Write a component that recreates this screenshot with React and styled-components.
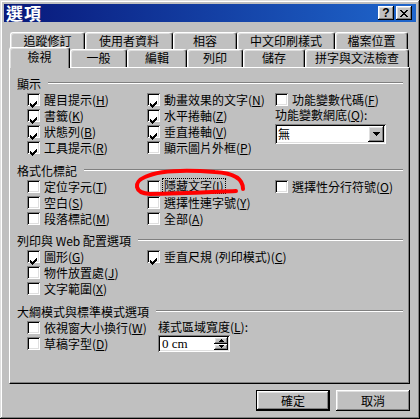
import React from "react";
import styled, { createGlobalStyle } from "styled-components";

const GlobalStyle = createGlobalStyle`
  html, body { margin: 0; padding: 0; background: #c0c0c0; }
  body {
    font-family: "Noto Sans CJK TC", "Noto Sans", sans-serif;
    font-size: 12px;
    color: #000;
  }
  * { box-sizing: border-box; }
`;

const raised = `
  box-shadow: inset -1px -1px #000, inset 1px 1px #fff,
    inset -2px -2px #808080, inset 2px 2px #dfdfdf;
`;
const sunken = `
  box-shadow: inset 1px 1px #808080, inset -1px -1px #fff,
    inset 2px 2px #000, inset -2px -2px #dfdfdf;
`;

const Window = styled.div`
  position: relative;
  width: 420px;
  height: 419px;
  padding: 4px;
  background: #c0c0c0;
  display: flex;
  flex-direction: column;
  box-shadow: inset -1px -1px #000, inset 1px 1px #dfdfdf,
    inset -2px -2px #808080, inset 2px 2px #fff;
`;

const TitleBar = styled.div`
  height: 18px;
  display: flex;
  align-items: center;
  padding: 0 4px 0 2px;
  background: linear-gradient(to right, #08187a, #1f66cc);
`;

const TitleText = styled.div`
  flex: 1;
  color: #fff;
  font-weight: bold;
  font-size: 17px;
  line-height: 18px;
  letter-spacing: 1px;
`;

const TitleButton = styled.div`
  width: 16px;
  height: 14px;
  margin-left: ${(p) => (p.$first ? 0 : 2)}px;
  background: #c0c0c0;
  display: flex;
  align-items: center;
  justify-content: center;
  font-family: "Liberation Sans", sans-serif;
  font-weight: bold;
  font-size: 12px;
  line-height: 14px;
  ${raised}
`;

const Body = styled.div`
  flex: 1;
  display: flex;
  flex-direction: column;
  padding: 10px 6px 0 5px;
`;

const TabRow = styled.div`
  display: flex;
  height: ${(p) => p.$h}px;
  margin-left: ${(p) => p.$indent || 0}px;
`;

const Tab = styled.div`
  width: ${(p) => p.$w}px;
  height: ${(p) => (p.$active ? p.$h + 3 : p.$h)}px;
  margin-top: ${(p) => (p.$active ? -2 : 0)}px;
  position: relative;
  z-index: ${(p) => (p.$active ? 1 : 0)};
  background: #c0c0c0;
  border-top: 1px solid #fff;
  border-left: 1px solid #fff;
  border-right: 1px solid #000;
  border-radius: 3px 3px 0 0;
  box-shadow: inset -1px 0 #808080, inset 1px 1px #dfdfdf;
  display: flex;
  justify-content: center;
  padding-top: ${(p) => (p.$active ? 1 : 0)}px;
  line-height: ${(p) => p.$h - 2}px;
  white-space: nowrap;
`;

const Panel = styled.div`
  height: 317px;
  padding: 7px 6px 0 7px;
  border-top: 1px solid #fff;
  border-left: 1px solid #fff;
  border-right: 1px solid #000;
  border-bottom: 1px solid #000;
  box-shadow: inset -1px -1px #808080;
`;

const Group = styled.div`
  margin-top: ${(p) => p.$gap || 0}px;
`;

const Legend = styled.div`
  display: flex;
  align-items: center;
  height: 16px;
  white-space: nowrap;
`;

const Rule = styled.div`
  flex: 1;
  height: 2px;
  margin-left: 7px;
  border-top: 1px solid #808080;
  border-bottom: 1px solid #fff;
`;

const Grid = styled.div`
  display: grid;
  grid-template-columns: ${(p) => p.$cols};
  grid-auto-rows: 16px;
  padding-left: 10px;
`;

const Item = styled.div`
  display: flex;
  align-items: center;
  gap: 4px;
  white-space: nowrap;
  grid-column: ${(p) => p.$col || "auto"};
  grid-row: ${(p) => p.$row || "auto"};
`;

const Box = styled.div`
  width: 13px;
  height: 13px;
  flex: none;
  background: #fff;
  padding: 2px;
  ${sunken}
`;

const Focus = styled.span`
  outline: 1px dotted #000;
  outline-offset: 0;
  padding: 0 1px;
  margin-left: -1px;
  line-height: 14px;
`;

const Text = styled.div`
  white-space: nowrap;
  grid-column: ${(p) => p.$col || "auto"};
  grid-row: ${(p) => p.$row || "auto"};
  line-height: 16px;
`;

const Combo = styled.div`
  grid-column: 3;
  grid-row: 3 / span 2;
  width: 111px;
  height: 20px;
  margin-top: 1px;
  padding: 2px;
  background: #fff;
  display: flex;
  align-items: center;
  ${sunken}
`;

const ComboValue = styled.div`
  flex: 1;
  padding-left: 1px;
  line-height: 16px;
`;

const ArrowBtn = styled.div`
  width: 16px;
  height: 16px;
  background: #c0c0c0;
  display: flex;
  align-items: center;
  justify-content: center;
  ${raised}
`;

const Spin = styled.div`
  grid-column: 2;
  grid-row: 2;
  width: 72px;
  height: 17px;
  padding: 2px;
  background: #fff;
  display: flex;
  ${sunken}
`;

const SpinValue = styled.div`
  flex: 1;
  font-family: "Liberation Serif", serif;
  font-size: 13px;
  line-height: 13px;
  padding-left: 2px;
`;

const SpinButtons = styled.div`
  width: 14px;
  display: flex;
  flex-direction: column;
`;

const SpinBtn = styled.div`
  flex: 1;
  background: #c0c0c0;
  display: flex;
  align-items: center;
  justify-content: center;
  ${raised}
`;

const ButtonRow = styled.div`
  display: flex;
  justify-content: flex-end;
  gap: 6px;
  margin-top: 6px;
`;

const Button = styled.div`
  width: 74px;
  height: 21px;
  background: #c0c0c0;
  display: flex;
  align-items: center;
  justify-content: center;
  line-height: 16px;
  border: ${(p) => (p.$default ? "1px solid #000" : "none")};
  ${raised}
`;

const Annotation = styled.svg`
  position: absolute;
  left: 0;
  top: 0;
  pointer-events: none;
`;

function CheckMark() {
  return (
    <svg width="9" height="9" viewBox="0 0 9 9" shapeRendering="crispEdges">
      <path
        d="M1 3h1v3h-1z M2 4h1v3h-1z M3 5h1v3h-1z M4 4h1v3h-1z M5 3h1v3h-1z M6 2h1v3h-1z M7 1h1v3h-1z"
        fill="#000"
      />
    </svg>
  );
}

function Acc({ k }) {
  return (
    <>
      (<u>{k}</u>)
    </>
  );
}

function Check({ checked, label, k, focus, col, row, suffix }) {
  const content = (
    <>
      {label}
      <Acc k={k} />
      {suffix}
    </>
  );
  return (
    <Item $col={col} $row={row}>
      <Box>{checked && <CheckMark />}</Box>
      {focus ? <Focus>{content}</Focus> : <span>{content}</span>}
    </Item>
  );
}

function Triangle({ up, w = 7 }) {
  const h = Math.ceil(w / 2);
  return (
    <svg width={w} height={h} viewBox={`0 0 ${w} ${h}`} shapeRendering="crispEdges">
      <polygon
        points={up ? `${w / 2},0 ${w},${h} 0,${h}` : `0,0 ${w},0 ${w / 2},${h}`}
        fill="#000"
      />
    </svg>
  );
}

const backTabs = [
  ["追蹤修訂", 75],
  ["使用者資料", 88],
  ["相容", 64],
  ["中文印刷樣式", 98],
  ["檔案位置", 73],
];

const frontTabs = [
  ["檢視", 61],
  ["一般", 57],
  ["編輯", 60],
  ["列印", 56],
  ["儲存", 62],
  ["拼字與文法檢查", 104],
];

export default function App() {
  return (
    <>
      <GlobalStyle />
      <Window>
        <TitleBar>
          <TitleText>選項</TitleText>
          <TitleButton $first>?</TitleButton>
          <TitleButton>
            <svg width="8" height="7" viewBox="0 0 8 7" shapeRendering="crispEdges">
              <path d="M0 0h2v1h-2z M1 1h2v1h-2z M2 2h4v1h-4z M3 3h2v1h-2z M2 4h4v1h-4z M1 5h2v1h-2z M0 6h2v1h-2z M6 0h2v1h-2z M5 1h2v1h-2z M5 5h2v1h-2z M6 6h2v1h-2z" fill="#000" />
            </svg>
          </TitleButton>
        </TitleBar>

        <Body>
          <TabRow $h={17} $indent={1}>
            {backTabs.map(([t, w]) => (
              <Tab key={t} $w={w} $h={17}>
                {t}
              </Tab>
            ))}
          </TabRow>
          <TabRow $h={18}>
            {frontTabs.map(([t, w], i) => (
              <Tab key={t} $w={w} $h={18} $active={i === 0}>
                {t}
              </Tab>
            ))}
          </TabRow>

          <Panel>
            <Group>
              <Legend>
                顯示
                <Rule />
              </Legend>
              <Grid $cols="120px 128px 1fr">
                <Check checked label="醒目提示" k="H" col={1} row={1} />
                <Check checked label="書籤" k="K" col={1} row={2} />
                <Check checked label="狀態列" k="B" col={1} row={3} />
                <Check checked label="工具提示" k="R" col={1} row={4} />
                <Check checked label="動畫效果的文字" k="N" col={2} row={1} />
                <Check checked label="水平捲軸" k="Z" col={2} row={2} />
                <Check checked label="垂直捲軸" k="V" col={2} row={3} />
                <Check label="顯示圖片外框" k="P" col={2} row={4} />
                <Check label="功能變數代碼" k="F" col={3} row={1} />
                <Text $col={3} $row={2}>
                  功能變數網底<Acc k="Q" />:
                </Text>
                <Combo>
                  <ComboValue>無</ComboValue>
                  <ArrowBtn>
                    <Triangle />
                  </ArrowBtn>
                </Combo>
              </Grid>
            </Group>

            <Group $gap={7}>
              <Legend>
                格式化標記
                <Rule />
              </Legend>
              <Grid $cols="120px 128px 1fr">
                <Check label="定位字元" k="T" col={1} row={1} />
                <Check label="空白" k="S" col={1} row={2} />
                <Check label="段落標記" k="M" col={1} row={3} />
                <Check label="隱藏文字" k="I" focus col={2} row={1} />
                <Check label="選擇性連字號" k="Y" col={2} row={2} />
                <Check label="全部" k="A" col={2} row={3} />
                <Check label="選擇性分行符號" k="O" col={3} row={1} />
              </Grid>
            </Group>

            <Group $gap={6}>
              <Legend>
                列印與 Web 配置選項
                <Rule />
              </Legend>
              <Grid $cols="120px 1fr">
                <Check checked label="圖形" k="G" col={1} row={1} />
                <Check label="物件放置處" k="J" col={1} row={2} />
                <Check label="文字範圍" k="X" col={1} row={3} />
                <Check checked label="垂直尺規 (列印模式)" k="C" col={2} row={1} />
              </Grid>
            </Group>

            <Group $gap={7}>
              <Legend>
                大綱模式與標準模式選項
                <Rule />
              </Legend>
              <Grid $cols="131px 1fr">
                <Check label="依視窗大小換行" k="W" col={1} row={1} />
                <Check label="草稿字型" k="D" col={1} row={2} />
                <Text $col={2} $row={1}>
                  樣式區域寬度<Acc k="L" />:
                </Text>
                <Spin>
                  <SpinValue>0 cm</SpinValue>
                  <SpinButtons>
                    <SpinBtn>
                      <Triangle up w={5} />
                    </SpinBtn>
                    <SpinBtn>
                      <Triangle w={5} />
                    </SpinBtn>
                  </SpinButtons>
                </Spin>
              </Grid>
            </Group>
          </Panel>

          <ButtonRow>
            <Button $default>確定</Button>
            <Button>取消</Button>
          </ButtonRow>
        </Body>

        <Annotation width="420" height="419" viewBox="0 0 420 419">
          <path
            d="M243 189 C243 179, 234 173, 215 172 C190 170, 160 170, 145 177 C133 182, 134 193, 150 194 C180 194, 212 192, 236 191"
            fill="none"
            stroke="#f00"
            strokeWidth="4"
            strokeLinecap="round"
          />
        </Annotation>
      </Window>
    </>
  );
}
